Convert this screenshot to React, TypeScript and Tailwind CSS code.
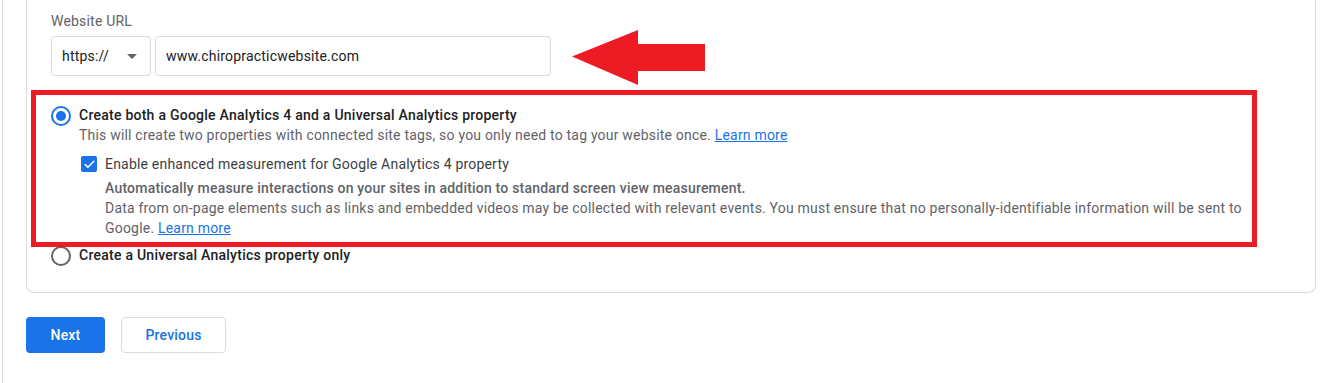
import { Check } from "lucide-react";

function Radio({ checked }: { checked?: boolean }) {
  return (
    <span
      className={
        "mt-[1px] flex h-5 w-5 shrink-0 items-center justify-center rounded-full border-2 " +
        (checked ? "border-[#1a73e8]" : "border-[#5f6368]")
      }
    >
      {checked && <span className="h-[10px] w-[10px] rounded-full bg-[#1a73e8]" />}
    </span>
  );
}

export default function App() {
  return (
    <div className="flex h-[383px] w-full overflow-hidden bg-white font-['Roboto',sans-serif] text-sm tracking-[0.2px]">
      <div className="ml-[2px] flex-1 border-l border-[#dadce0] pl-[23px]">
        {/* property setup card */}
        <div className="relative w-[1290px] rounded-b-lg border border-t-0 border-[#dadce0] pb-[26px] pl-6 pt-[11px]">
          <div className="text-[14px] leading-5 text-[#5f6368]">Website URL</div>

          <div className="mt-[5px] flex gap-1">
            <div className="flex h-10 w-[100px] items-center justify-between rounded border border-[#dadce0] pl-[10px] pr-[13px] text-[#202124]">
              <span>https://</span>
              <span className="h-0 w-0 border-x-[5px] border-t-[5px] border-x-transparent border-t-[#5f6368]" />
            </div>
            <div className="flex h-10 w-[396px] items-center rounded border border-[#dadce0] px-[10px] text-[#202124]">
              www.chiropracticwebsite.com
            </div>
          </div>

          <div className="mt-[29px] flex items-start gap-2">
            <Radio checked />
            <div className="flex flex-col leading-5">
              <div className="font-medium tracking-[0.25px] text-[#202124]">
                Create both a Google Analytics 4 and a Universal Analytics property
              </div>
              <div className="text-[#5f6368]">
                This will create two properties with connected site tags, so you only need to tag your website once.{" "}
                <a className="text-[#1a73e8] underline">Learn more</a>
              </div>

              <div className="ml-[2px] mt-[9px] flex items-start gap-2">
                <span className="mt-[2px] flex h-4 w-4 shrink-0 items-center justify-center rounded-[2px] bg-[#1a73e8]">
                  <Check size={13} strokeWidth={3} className="text-white" />
                </span>
                <div className="flex w-[1160px] flex-col">
                  <div className="text-[#3c4043]">Enable enhanced measurement for Google Analytics 4 property</div>
                  <div className="mt-[4px] font-medium text-[#5f6368]">
                    Automatically measure interactions on your sites in addition to standard screen view measurement.
                  </div>
                  <div className="text-[#5f6368]">
                    Data from on-page elements such as links and embedded videos may be collected with relevant events. You
                    must ensure that no personally-identifiable information will be sent to Google.{" "}
                    <a className="text-[#1a73e8] underline">Learn more</a>
                  </div>
                </div>
              </div>
            </div>
          </div>

          <div className="mt-[7px] flex items-start gap-2">
            <Radio />
            <div className="font-medium leading-5 tracking-[0.25px] text-[#202124]">
              Create a Universal Analytics property only
            </div>
          </div>

          {/* annotations */}
          <div className="pointer-events-none absolute left-[4px] top-[90px] h-[157px] w-[1226px] border-[5px] border-[#ed1c24]" />
          <svg className="absolute left-[545px] top-[30px]" width="133" height="55" viewBox="0 0 133 55">
            <polygon points="0,26.5 66,0 66,14 133,14 133,41 66,41 66,55" fill="#ed1c24" />
          </svg>
        </div>

        <div className="mt-6 flex gap-4">
          <button className="h-9 w-[79px] rounded bg-[#1a73e8] font-medium text-white">Next</button>
          <button className="h-9 w-[105px] rounded border border-[#dadce0] font-medium text-[#1a73e8]">Previous</button>
        </div>
      </div>
    </div>
  );
}
